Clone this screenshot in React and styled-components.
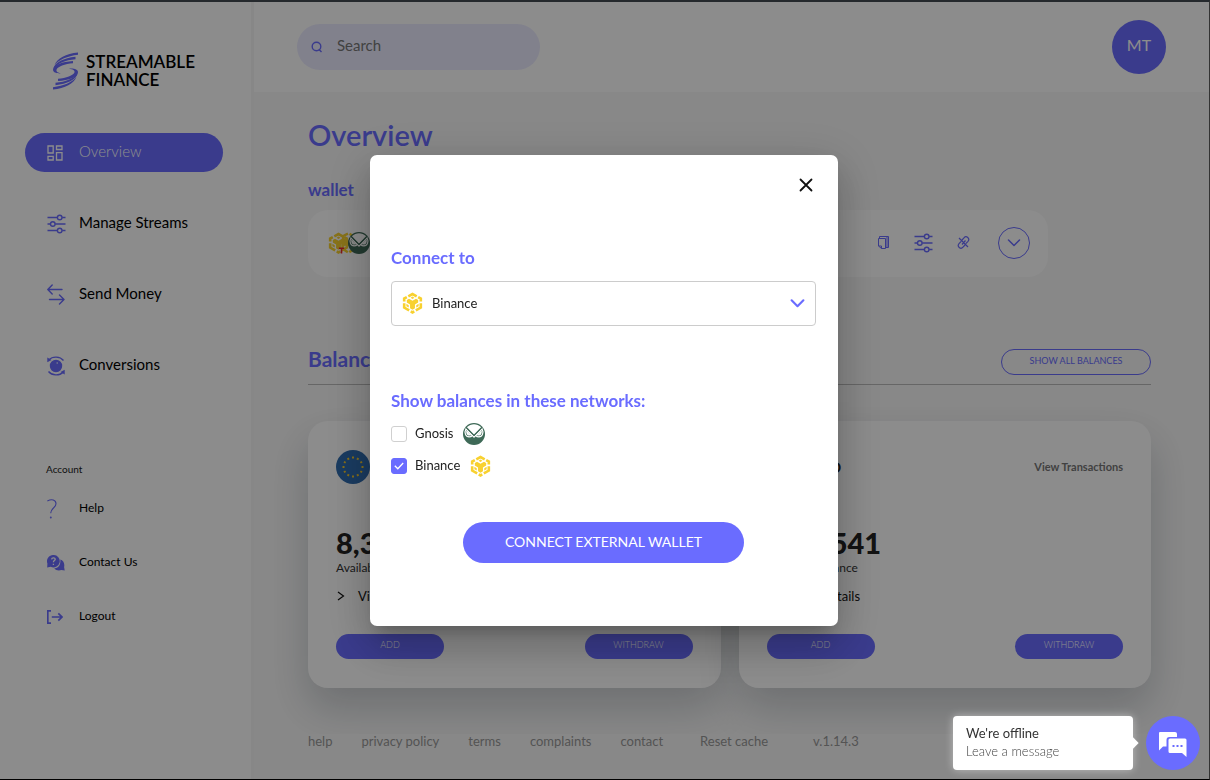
import React, { useState } from 'react'
import styled, { createGlobalStyle } from 'styled-components'

const GlobalStyle = createGlobalStyle`
  * {
    box-sizing: border-box;
  }
  body {
    margin: 0;
    background: #f8f8f8;
    font-family: Lato, 'Open Sans', sans-serif;
    font-size: 14px;
    color: #000;
  }
  button, input, select {
    font-family: inherit;
  }
  h1, h2, h3, p {
    margin: 0;
  }
`

const Frame = styled.div`
  display: flex;
  min-height: 100vh;
  border-top: 2px solid #25292d;
  border-right: 1px solid #333;
  border-bottom: 1px solid #000;
`

const Sidebar = styled.aside`
  flex: 0 0 251px;
  background: #fff;
  padding: 48px 28px 0 25px;
`

const Logo = styled.a`
  display: flex;
  align-items: center;
  gap: 8px;
  height: 42px;
  padding-left: 28px;
  font-size: 17px;
  line-height: 18px;
  font-weight: 600;
  color: #000;
  text-decoration: none;
`

const Menu = styled.nav`
  display: flex;
  flex-direction: column;
  gap: ${props => (props.small ? '30px' : '32px')};
  margin-top: ${props => (props.small ? '21px' : '41px')};
`

const MenuLink = styled.a`
  display: grid;
  grid-template-columns: 32px 1fr;
  align-items: center;
  height: ${props => (props.small ? '24px' : '39px')};
  padding: 0 0 4px 22px;
  border-radius: 20px;
  font-size: ${props => (props.small ? '12px' : '15px')};
  font-weight: ${props => (props.active ? '300' : '400')};
  color: ${props => (props.active ? '#fff' : '#000')};
  background: ${props => (props.active ? '#6a6cff' : 'transparent')};
  text-decoration: none;
  svg {
    display: block;
    position: relative;
    top: 2px;
  }
`

const MenuTitle = styled.h3`
  margin-top: 77px;
  padding-left: 21px;
  font-size: 10px;
  line-height: 14px;
  font-weight: 400;
  color: #222;
`

const Main = styled.div`
  flex: 1;
  min-width: 0;
  display: flex;
  flex-direction: column;
  border-left: 3px solid #f6f6f6;
`

const Header = styled.header`
  display: flex;
  justify-content: space-between;
  align-items: center;
  height: 90px;
  padding: 0 43px;
  background: #fff;
`

const SearchBox = styled.label`
  display: flex;
  align-items: center;
  gap: 14px;
  width: 243px;
  height: 46px;
  padding: 0 14px;
  border-radius: 23px;
  background: #ebebff;
`

const SearchInput = styled.input`
  flex: 1;
  min-width: 0;
  border: 0;
  padding: 0 0 4px;
  outline: none;
  background: transparent;
  font-size: 15px;
  &::placeholder {
    color: #777;
  }
`

const Avatar = styled.button`
  width: 54px;
  height: 54px;
  padding: 0 0 5px;
  border: 0;
  border-radius: 50%;
  background: #6a6cff;
  color: #fff;
  font-size: 16px;
  font-weight: 400;
`

const Content = styled.main`
  padding: 23px 58px 46px 54px;
  overflow: hidden;
`

const Title = styled.h1`
  font-size: 29px;
  line-height: 40px;
  font-weight: 600;
  color: #6a6cff;
`

const WalletTitle = styled.h2`
  margin-top: 25px;
  font-size: 17px;
  line-height: 20px;
  font-weight: 700;
  color: #6a6cff;
`

const WalletCard = styled.section`
  display: flex;
  justify-content: space-between;
  align-items: center;
  max-width: 740px;
  height: 67px;
  margin-top: 10px;
  padding: 0 18px 2px 20px;
  border-radius: 20px;
  background: #fff;
`

const Coins = styled.div`
  display: flex;
  align-items: center;
  svg + svg {
    margin-left: -11px;
  }
`

const WalletActions = styled.div`
  display: flex;
  align-items: center;
  gap: 24px;
`

const IconButton = styled.button`
  display: flex;
  align-items: center;
  justify-content: center;
  padding: 0;
  border: ${props => (props.round ? '1px solid #6a6cff' : '0')};
  width: ${props => (props.round ? '32px' : 'auto')};
  height: ${props => (props.round ? '32px' : 'auto')};
  margin-left: ${props => (props.round ? '4px' : '0')};
  border-radius: 50%;
  background: transparent;
  color: ${props => props.color || '#6a6cff'};
  cursor: pointer;
`

const BalancesHead = styled.div`
  display: flex;
  justify-content: space-between;
  align-items: center;
  height: 46px;
  margin-top: 62px;
  border-bottom: 1px solid #bbb;
`

const BalancesTitle = styled.h2`
  padding-bottom: 6px;
  font-size: 21px;
  font-weight: 700;
  color: #6a6cff;
`

const OutlineButton = styled.button`
  width: 150px;
  height: 26px;
  padding: 0 0 2px;
  border: 1px solid #6a6cff;
  border-radius: 13px;
  background: transparent;
  color: #6a6cff;
  font-size: 9px;
`

const Cards = styled.div`
  display: grid;
  grid-template-columns: 1fr 1fr;
  gap: 18px;
  margin-top: 36px;
`

const Card = styled.section`
  padding: 28px 28px 29px;
  border-radius: 20px;
  background: #fff;
  box-shadow: 0 20px 40px rgba(8, 25, 40, 0.2);
`

const CardHead = styled.div`
  display: flex;
  align-items: center;
  gap: 10px;
  height: 36px;
`

const Currency = styled.h3`
  font-size: 15px;
  font-weight: 700;
  color: #222;
`

const CardLink = styled.a`
  margin-left: auto;
  padding-bottom: 2px;
  font-size: 11px;
  font-weight: 700;
  color: #777;
  text-decoration: none;
`

const Amount = styled.p`
  margin-top: 40px;
  font-size: 29px;
  line-height: 36px;
  font-weight: 900;
  color: #222;
`

const Note = styled.p`
  font-size: 12px;
  line-height: 14px;
  color: #333;
`

const Details = styled.button`
  display: flex;
  align-items: center;
  gap: 12px;
  height: 20px;
  margin-top: 11px;
  padding: 0;
  border: 0;
  background: transparent;
  font-size: 13px;
  color: #111;
`

const CardActions = styled.div`
  display: flex;
  justify-content: space-between;
  margin-top: 28px;
`

const SmallButton = styled.button`
  width: 108px;
  height: 25px;
  padding: 0 0 4px;
  border: 0;
  border-radius: 13px;
  background: #6a6cff;
  color: #fff;
  font-size: 9px;
  font-weight: 300;
`

const Footer = styled.footer`
  position: relative;
  flex: 1;
  display: flex;
  align-items: flex-start;
  gap: 29px;
  padding: 0 54px;
  background: #f8f8f8;
  font-size: 13px;
  line-height: 14px;
  color: #999;
  a {
    color: inherit;
    text-decoration: none;
  }
`

const ResetButton = styled.button`
  margin: 0 16px 0 8px;
  padding: 0;
  border: 0;
  background: transparent;
  color: inherit;
  font-size: 13px;
  line-height: 14px;
`

const Overlay = styled.div`
  position: fixed;
  inset: 2px 1px 1px 0;
  display: flex;
  align-items: center;
  justify-content: center;
  padding-right: 1px;
  background: rgba(0, 0, 0, 0.45);
`

const Modal = styled.form`
  display: flex;
  flex-direction: column;
  width: 468px;
  padding: 20px 22px 63px 21px;
  border-radius: 7px;
  background: #fff;
  box-shadow: 0 11px 15px -7px rgba(0, 0, 0, 0.2), 0 24px 38px 3px rgba(0, 0, 0, 0.14), 0 9px 46px 8px rgba(0, 0, 0, 0.12);
`

const CloseRow = styled.div`
  display: flex;
  justify-content: flex-end;
`

const FieldLabel = styled.label`
  margin-top: 53px;
  font-size: 17px;
  line-height: 20px;
  font-weight: 700;
  color: #6a6cff;
`

const SelectBox = styled.div`
  position: relative;
  margin-top: 13px;
`

const Select = styled.select`
  display: block;
  appearance: none;
  width: 100%;
  height: 45px;
  padding: 0 40px 2px 40px;
  border: 1px solid #ccc;
  border-radius: 4px;
  background: #fff;
  color: #222;
  font-size: 13px;
`

const SelectIcon = styled.span`
  position: absolute;
  top: 0;
  bottom: 0;
  left: ${props => (props.end ? 'auto' : '11px')};
  right: ${props => (props.end ? '11px' : 'auto')};
  display: flex;
  align-items: center;
  padding-bottom: 1px;
  color: #6a6cff;
  pointer-events: none;
`

const Networks = styled.fieldset`
  display: flex;
  flex-direction: column;
  gap: 8px;
  margin: 65px 0 0;
  padding: 0;
  border: 0;
`

const Legend = styled.legend`
  padding: 0 0 11px;
  font-size: 17px;
  line-height: 20px;
  font-weight: 700;
  color: #6a6cff;
`

const Network = styled.label`
  display: flex;
  align-items: center;
  gap: 8px;
  height: 24px;
  font-size: 13px;
  line-height: 20px;
  color: #222;
`

const NetworkName = styled.span`
  padding: 0 2px 3px 0;
`

const Tick = styled.span`
  position: relative;
  width: 16px;
  height: 16px;
  svg {
    position: absolute;
    top: 4px;
    left: 3px;
    pointer-events: none;
  }
`

const Checkbox = styled.input`
  appearance: none;
  display: block;
  width: 16px;
  height: 16px;
  margin: 0;
  border: 1px solid #d0d0d0;
  border-radius: 3px;
  &:checked {
    border-color: #6a6cff;
    background: #6a6cff;
  }
`

const ConnectButton = styled.button`
  align-self: center;
  width: 281px;
  height: 41px;
  margin-top: 44px;
  padding: 0 0 2px;
  border: 0;
  border-radius: 21px;
  background: #6a6cff;
  color: #fff;
  font-size: 14px;
`

const Chat = styled.div`
  position: fixed;
  right: 10px;
  bottom: 10px;
  display: flex;
  gap: 13px;
`

const ChatBubble = styled.div`
  position: relative;
  width: 180px;
  height: 54px;
  padding: 8px 13px;
  border-radius: 4px;
  background: #fff;
  box-shadow: 0 0 8px rgba(255, 255, 255, 0.45);
  &::after {
    content: '';
    position: absolute;
    top: 23px;
    right: -4px;
    width: 8px;
    height: 8px;
    background: #fff;
    transform: rotate(45deg);
  }
`

const ChatTitle = styled.p`
  font-size: 13px;
  line-height: 18px;
  color: #333;
`

const ChatText = styled.p`
  font-size: 13px;
  line-height: 18px;
  font-weight: 300;
  color: #444;
`

const ChatButton = styled.button`
  display: flex;
  align-items: center;
  justify-content: center;
  width: 54px;
  height: 54px;
  padding: 3px 0 0;
  border: 0;
  border-radius: 50%;
  background: #6a6cff;
`

const LogoHalf = () => (
  <>
    <path d="M25 .5C13 1.600 4 6.500 1.500 13 6.500 7.500 14 4.200 25 2.800z" />
    <path d="M22.500 4.800C11 6 1.500 10.500.500 16.500 5 11 12 8.200 22.500 7.200z" />
    <path d="M20 9C9 9.800 0 13 0 17.800c0 2.800 4 4 9 3.500-4-.3-6-1.600-5.500-3.600C4.500 14.500 12 11.800 20 11.200z" />
  </>
)

const LogoIcon = () => (
  <svg width="25" height="38" viewBox="0 0 25 38" fill="#6a6cff">
    <LogoHalf />
    <g transform="rotate(180 12.500 19)"><LogoHalf /></g>
  </svg>
)

const GridIcon = () => (
  <svg width="16" height="16" viewBox="0 0 16 16" fill="none" stroke="currentColor" strokeWidth="1.300">
    <path d="M1 1h5.200v7H1zM9.500 1H15v3.500H9.500zM1 11.300h5.200V15H1zM9.500 7.700H15V15H9.500z" />
  </svg>
)

const SlidersIcon = () => (
  <svg width="19" height="20" viewBox="0 0 19 20" fill="none" stroke="#6a6cff" strokeWidth="1.400">
    <path d="M.5 3.500h9.800M15.200 3.500h3.300M.5 10h2.800M8.200 10h10.300M.5 16.500h9.800M15.200 16.500h3.300" />
    <circle cx="12.700" cy="3.500" r="2.300" />
    <circle cx="5.800" cy="10" r="2.300" />
    <circle cx="12.700" cy="16.500" r="2.300" />
  </svg>
)

const SendIcon = () => (
  <svg width="18" height="21" viewBox="0 0 18 21" fill="none" stroke="#6a6cff" strokeWidth="1.400" strokeLinecap="round" strokeLinejoin="round">
    <path d="M15 5.500H1M5.200 1 .8 5.500l4.400 4.500M2.500 15.500h14M12.500 11l4.500 4.500-4.500 4.500" />
  </svg>
)

const ConversionIcon = () => (
  <svg width="18" height="20" viewBox="0 0 18 20" fill="none" stroke="#6a6cff" strokeWidth="1.400">
    <circle cx="9" cy="10" r="5.500" fill="#6a6cff" />
    <path d="M16.500 4.500C13 .2 5.500 0 2 3.800M1.500 15.500c3.500 4.300 11 4.500 14.500.7" />
    <path d="M.3 1.500v4.800l4.200-2.400zM17.700 18.500v-4.800l-4.200 2.400z" fill="#6a6cff" stroke="none" />
    <path d="M9.500 7h1.500" stroke="#fff" strokeWidth="1" />
  </svg>
)

const HelpIcon = () => (
  <svg width="10" height="20" viewBox="0 0 10 20" fill="none" stroke="#6a6cff" strokeWidth="1.100" strokeLinecap="round">
    <path d="M.8 1.800C4.500-.2 9 .8 9 4.800c0 4-5.200 4.500-5.200 9" />
    <circle cx="3.800" cy="18.500" r=".4" />
  </svg>
)

const ContactIcon = () => (
  <svg width="18" height="16" viewBox="0 0 18 16" fill="#6a6cff">
    <path d="M13.300 4.500c2.500.9 4 2.800 4 5.500 0 1 0 1.400-.2 2l.6 3.500-3.300-.5c-2.800 1-5.600.3-7.200-1.800 4 .5 6.800-3.200 6.100-8.700z" />
    <path d="M6.300 0a6.200 6.200 0 1 1-2.600 11.700L.2 12.500.4 8.500A6.200 6.200 0 0 1 6.300 0z" />
    <path d="M4.600 4.400c.2-2.200 3.700-2 3.600 0C8.100 5.600 6.400 5.700 6.400 7.300M6.400 8.800v1.200" fill="none" stroke="#fff" strokeWidth="1.300" />
  </svg>
)

const LogoutIcon = () => (
  <svg width="16" height="14" viewBox="0 0 16 14" fill="none" stroke="#6a6cff" strokeWidth="1.700">
    <path d="M4 .8H.8v12.400H4M4.800 7h10M11.300 3.300 15 7l-3.700 3.700" />
  </svg>
)

const SearchIcon = () => (
  <svg width="12" height="12" viewBox="0 0 12 12" fill="none" stroke="#6a6cff" strokeWidth="1.400">
    <circle cx="5.500" cy="5.500" r="4.300" />
    <path d="m7.800 8.300 2.700 2.700" />
  </svg>
)

const CopyIcon = () => (
  <svg width="13" height="13" viewBox="0 0 13 13" fill="none" stroke="currentColor">
    <path d="M1.500 2.500h7v10h-4l-3-2.500zM1.500 10h3v2.500M2.500 2.500v-2h9v11h-3M10 1v10" />
  </svg>
)

const UnlinkIcon = () => (
  <svg width="13" height="13" viewBox="0 0 12 13" fill="none" stroke="currentColor" strokeWidth="1.200">
    <path d="m4.500 4 2-2.200a2.600 2.600 0 0 1 4 3.500L8.300 7.700M7.500 9l-2 2.200a2.600 2.600 0 0 1-4-3.500l2.200-2.400M1.500 2l9 9M4.500 8.500l3.500-4" />
  </svg>
)

const ChevronIcon = ({ size = 14, weight = 1.5 }) => (
  <svg width={size} height={size} viewBox="0 0 14 14" fill="none" stroke="currentColor" strokeWidth={weight} strokeLinecap="round" strokeLinejoin="round">
    <path d="m1.500 4 5.500 5.500L12.500 4" />
  </svg>
)

const ArrowIcon = () => (
  <svg width="10" height="10" viewBox="0 0 10 10" fill="none" stroke="#111" strokeWidth="1.200">
    <path d="m2 1 5.500 4L2 9" />
  </svg>
)

const CloseIcon = () => (
  <svg width="20" height="20" viewBox="0 0 20 20" fill="none" stroke="currentColor" strokeWidth="1.800" strokeLinecap="round">
    <path d="m4.500 4.500 11 11M15.500 4.500l-11 11" />
  </svg>
)

const BinanceIcon = () => (
  <svg width="21" height="22" viewBox="0 0 24 25" fill="#f8d12f">
    <g fill="none" stroke="#f8d12f" strokeWidth="3">
      <path d="M7.200 4.900 12 2.200l4.800 2.700" />
      <path d="M2.500 10.800V7.400l3-1.700M21.500 10.800V7.400l-3-1.700" />
      <path d="M2.500 12.800v4.900l5.700 3.300M21.500 12.800v4.900L15.800 21" />
      <path d="M10 22 12 23.200l2-1.200" />
    </g>
    <path d="M5.500 9 8 7.600l4 2.300 4-2.300L18.500 9v3l-3.700 2.200v4.400L12 20.200l-2.800-1.600v-4.400L5.500 12z" />
    <path d="m12 5.200 2.200 1.300L12 7.800 9.800 6.500zM5 13.400l2.700 1.600v2.700L5 16.100zM19 13.400 16.300 15v2.700l2.700-1.600z" />
  </svg>
)

const TronCoin = () => (
  <svg width="21" height="22" viewBox="0 0 24 25">
    <path d="M6 4.500 12 1.500l9 5v11.500L12 23.500 5 19z" fill="none" stroke="#f8d12f" strokeWidth="2.800" strokeDasharray="6 2" />
    <path d="M4 9 8 7.600l4 2.300 4-2.300L18.500 9v2.700l-4 4H4z" fill="#f8d12f" />
    <path d="M1 18.500h6M4 18.500v6" stroke="#e8262d" strokeWidth="1.800" />
  </svg>
)

const GnosisIcon = () => (
  <svg width="22" height="22" viewBox="0 0 22 22">
    <circle cx="11" cy="11" r="11" fill="#3e6957" />
    <path d="M3.800 4.200C8 .1 14 .1 18.200 4.200L11 11.800z" fill="#fff" />
    <g fill="none" stroke="#fff" strokeWidth="1.200">
      <path d="m3 5.800 6.500 6.700c-1 .9-2.200 1.400-3.400 1.400C2.600 13.900 1 9.800 3 5.800zM19 5.800l-6.500 6.700c1 .9 2.200 1.400 3.400 1.400 3.500 0 5.100-4.100 3.100-8.100z" />
      <path d="m3.800 8.500 3.500 3.300c-2.300.6-3.600-1-3.500-3.300zM18.200 8.500l-3.500 3.300c2.300.6 3.600-1 3.500-3.300zM9 12.200l2 2 2-2" />
    </g>
    <path d="m3.600 4.800 7.400 7.600 7.400-7.600" fill="none" stroke="#3e6957" strokeWidth="1.100" />
  </svg>
)

const EuroFlag = () => (
  <svg width="34" height="34" viewBox="0 0 34 34">
    <circle cx="17" cy="17" r="17" fill="#2f6cb0" />
    {[...Array(12)].map((_, i) => (
      <rect key={i} x="16" y="6.500" width="2" height="2" fill="#f5c92c" transform={`rotate(${i * 30} 17 17)`} />
    ))}
  </svg>
)

const DollarFlag = () => (
  <svg width="34" height="34" viewBox="0 0 34 34">
    <circle cx="17" cy="17" r="17" fill="#f2f2f2" />
    <path d="M3 9h28M0 15h34M0 21h34M4 27h26" stroke="#d33" strokeWidth="3" />
    <path d="M17 0A17 17 0 0 0 0 17h17z" fill="#2f6cb0" />
  </svg>
)

const ChatIcon = () => (
  <svg width="30" height="26" viewBox="0 0 30 26" fill="#fff">
    <path d="M2 0h15a2 2 0 0 1 2 2v3h-7.500a3 3 0 0 0-3 3v6.500H5L1 18.500V1a1 1 0 0 1 1-1z" />
    <path d="M12 6.500h15a1.500 1.500 0 0 1 1.500 1.500v17L24 21H12a1.500 1.500 0 0 1-1.500-1.500V8A1.500 1.500 0 0 1 12 6.500z" />
    <path d="M14.500 13h2v2h-2zM18.500 13h2v2h-2zM22.500 13h2v2h-2z" fill="#6a6cff" />
  </svg>
)

const balances = [
  { currency: 'EUR', amount: '8,312.406', flag: <EuroFlag /> },
  { currency: 'USD', amount: '1,87.541', flag: <DollarFlag /> },
]

const App = () => {
  const [gnosis, setGnosis] = useState(false)
  const [binance, setBinance] = useState(true)

  return (
    <>
      <GlobalStyle />
      <Frame>
        <Sidebar>
          <Logo href="#">
            <LogoIcon />
            <span>STREAMABLE<br />FINANCE</span>
          </Logo>
          <Menu>
            <MenuLink href="#" active><GridIcon />Overview</MenuLink>
            <MenuLink href="#"><SlidersIcon />Manage Streams</MenuLink>
            <MenuLink href="#"><SendIcon />Send Money</MenuLink>
            <MenuLink href="#"><ConversionIcon />Conversions</MenuLink>
          </Menu>
          <MenuTitle>Account</MenuTitle>
          <Menu small>
            <MenuLink small href="#"><HelpIcon />Help</MenuLink>
            <MenuLink small href="#"><ContactIcon />Contact Us</MenuLink>
            <MenuLink small href="#"><LogoutIcon />Logout</MenuLink>
          </Menu>
        </Sidebar>
        <Main>
          <Header>
            <SearchBox>
              <SearchIcon />
              <SearchInput type="text" placeholder="Search" aria-label="Search" />
            </SearchBox>
            <Avatar>MT</Avatar>
          </Header>
          <Content>
            <Title>Overview</Title>
            <WalletTitle>wallet</WalletTitle>
            <WalletCard>
              <Coins>
                <BinanceIcon />
                <TronCoin />
                <GnosisIcon />
              </Coins>
              <WalletActions>
                <IconButton aria-label="Copy address"><CopyIcon /></IconButton>
                <IconButton aria-label="Settings"><SlidersIcon /></IconButton>
                <IconButton aria-label="Disconnect"><UnlinkIcon /></IconButton>
                <IconButton round aria-label="Expand"><ChevronIcon /></IconButton>
              </WalletActions>
            </WalletCard>
            <BalancesHead>
              <BalancesTitle>Balances</BalancesTitle>
              <OutlineButton>SHOW ALL BALANCES</OutlineButton>
            </BalancesHead>
            <Cards>
              {balances.map(item => (
                <Card key={item.currency}>
                  <CardHead>
                    {item.flag}
                    <Currency>{item.currency}</Currency>
                    <CardLink href="#">View Transactions</CardLink>
                  </CardHead>
                  <Amount>{item.amount}</Amount>
                  <Note>Available Balance</Note>
                  <Details><ArrowIcon />View Details</Details>
                  <CardActions>
                    <SmallButton>ADD</SmallButton>
                    <SmallButton>WITHDRAW</SmallButton>
                  </CardActions>
                </Card>
              ))}
            </Cards>
          </Content>
          <Footer>
            <a href="#">help</a>
            <a href="#">privacy policy</a>
            <a href="#">terms</a>
            <a href="#">complaints</a>
            <a href="#">contact</a>
            <ResetButton>Reset cache</ResetButton>
            <span>v.1.14.3</span>
          </Footer>
        </Main>
      </Frame>
      <Overlay>
        <Modal onSubmit={e => e.preventDefault()}>
          <CloseRow>
            <IconButton type="button" color="#111" aria-label="Close"><CloseIcon /></IconButton>
          </CloseRow>
          <FieldLabel htmlFor="network">Connect to</FieldLabel>
          <SelectBox>
            <Select id="network" defaultValue="binance">
              <option value="binance">Binance</option>
              <option value="gnosis">Gnosis</option>
            </Select>
            <SelectIcon><BinanceIcon /></SelectIcon>
            <SelectIcon end><ChevronIcon size={15} weight={2} /></SelectIcon>
          </SelectBox>
          <Networks>
            <Legend>Show balances in these networks:</Legend>
            <Network>
              <Tick>
                <Checkbox type="checkbox" checked={gnosis} onChange={() => setGnosis(!gnosis)} />
              </Tick>
              <NetworkName>Gnosis</NetworkName>
              <GnosisIcon />
            </Network>
            <Network>
              <Tick>
                <Checkbox type="checkbox" checked={binance} onChange={() => setBinance(!binance)} />
                {binance && (
                  <svg width="10" height="8" viewBox="0 0 10 8" fill="none" stroke="#fff" strokeWidth="1.300">
                    <path d="m.8 3.800 3 3L9.200 1" />
                  </svg>
                )}
              </Tick>
              <NetworkName>Binance</NetworkName>
              <BinanceIcon />
            </Network>
          </Networks>
          <ConnectButton>CONNECT EXTERNAL WALLET</ConnectButton>
        </Modal>
      </Overlay>
      <Chat>
        <ChatBubble>
          <ChatTitle>We're offline</ChatTitle>
          <ChatText>Leave a message</ChatText>
        </ChatBubble>
        <ChatButton aria-label="Open chat"><ChatIcon /></ChatButton>
      </Chat>
    </>
  )
}

export default App
